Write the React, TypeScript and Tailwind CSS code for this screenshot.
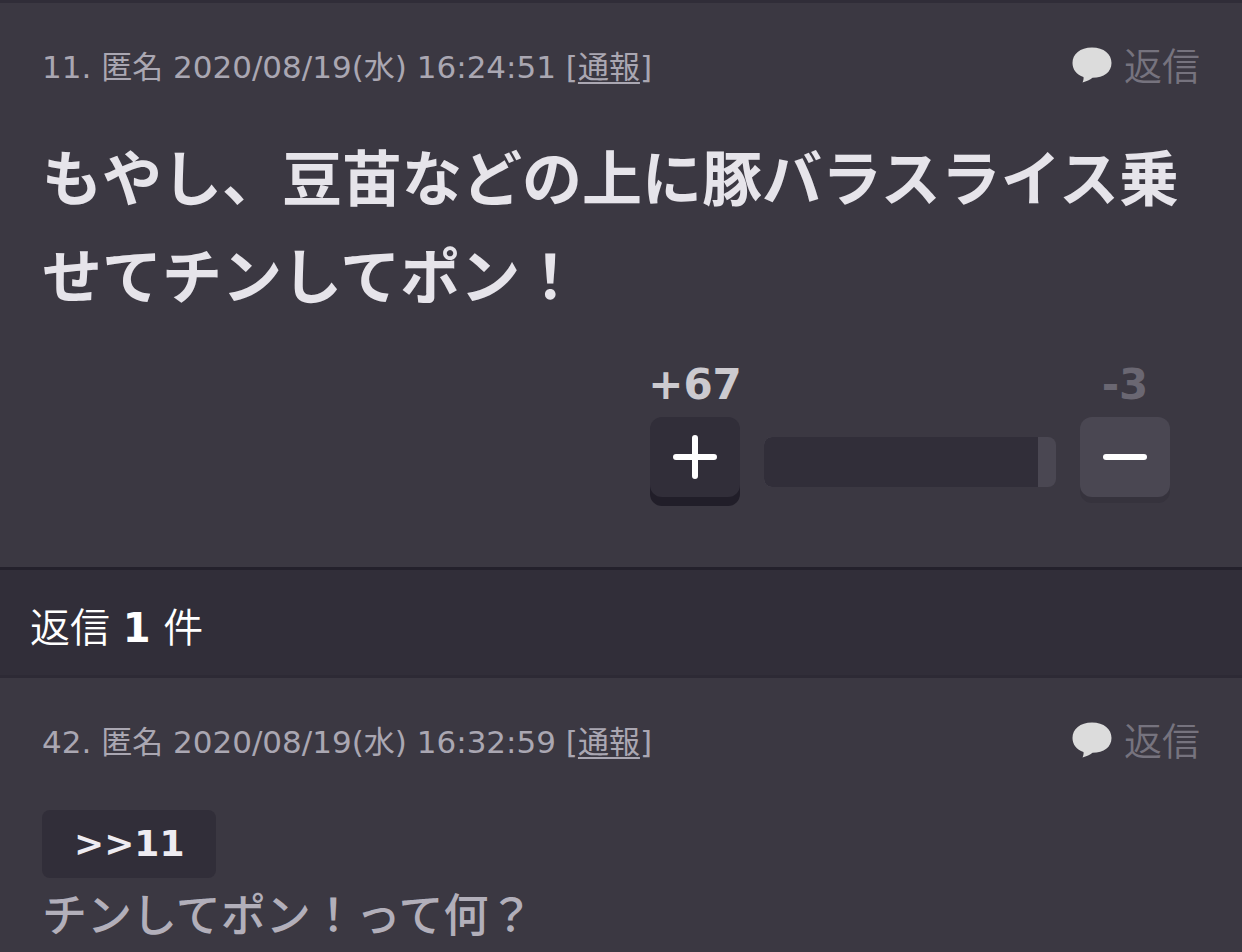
interface Comment {
    id: number;
    nome: string;
    date: string;
}

const FillBubble = () => (
    <svg viewBox="0 0 40 36" className="mb-1 h-9 w-10 shrink-0" aria-hidden="true">
        <path
            d="M20 0.500C8 0.500 0.500 7 0.500 16C0.500 22.500 4.500 27.500 11.500 30C11.800 32 11.300 33.800 10.500 35.500C14.500 34.500 18 33 20.500 30.800C32 30.800 39.500 25 39.500 16C39.500 7 32 0.500 20 0.500Z"
            fill="#dcdcdc"
        />
    </svg>
);

const MetaRow = ({ id, nome, date }: Comment) => (
    <header className="flex h-12 items-center justify-between text-[#aaa7b2]">
        <p className="whitespace-nowrap text-[31px] leading-12">
            {id}. {nome} {date} [
            <a href="#report" className="underline decoration-2 underline-offset-4">通報</a>]
        </p>
        <a href="#reply" className="flex items-center gap-3 text-[38px] leading-12 font-[350] text-[#76737e]">
            <FillBubble />
            返信
        </a>
    </header>
);

const Votes = ({ plus, minus, ratio }: { plus: number; minus: number; ratio: number }) => (
    <div className="mt-[34px] mr-[30px] ml-auto flex w-[520px] max-w-full gap-6">
        <div className="flex w-[90px] flex-col items-center">
            <span className="text-[42px] leading-12 font-bold text-[#cccacf]">+{plus}</span>
            <button
                type="button"
                aria-label="プラス"
                className="mt-2 flex h-20 w-full items-center justify-center rounded-xl bg-[#312e39] shadow-[0_9px_0_#211e29]"
            >
                <svg viewBox="0 0 44 44" className="h-11 w-11" stroke="#fff" strokeWidth="6" strokeLinecap="round" aria-hidden="true">
                    <path d="M3 22H41M22 3V41" />
                </svg>
            </button>
        </div>
        <div className="mt-19 flex h-[50px] flex-1 overflow-hidden rounded-lg bg-[#4a4752]">
            <div className="h-full rounded-l-lg bg-[#312e39]" style={{ width: `${ratio}%` }} />
        </div>
        <div className="flex w-[90px] flex-col items-center">
            <span className="text-[42px] leading-12 font-bold text-[#6a6772]">-{minus}</span>
            <button
                type="button"
                aria-label="マイナス"
                className="mt-2 flex h-20 w-full items-center justify-center rounded-xl bg-[#4a4752] shadow-[0_6px_0_#36333d]"
            >
                <svg viewBox="0 0 44 44" className="h-11 w-11" stroke="#fff" strokeWidth="6" strokeLinecap="round" aria-hidden="true">
                    <path d="M3 22H41" />
                </svg>
            </button>
        </div>
    </div>
);

const App = () => {
    return (
        <main className="min-h-screen bg-[#3b3842] font-['DejaVu_Sans','Noto_Sans_CJK_JP',sans-serif]">
            <article className="border-t-3 border-[#302d38] px-[42px] pt-10 pb-[70px]">
                <MetaRow id={11} nome="匿名" date="2020/08/19(水) 16:24:51" />
                <p className="mt-10 text-[60px] leading-[98px] font-semibold text-[#e6e4ea]">
                    もやし、豆苗などの上に豚バラスライス乗せてチンしてポン！
                </p>
                <Votes plus={67} minus={3} ratio={94} />
            </article>

            <h2 className="border-y-3 border-t-[#24212c] border-b-[#2d2a35] bg-[#312e39] px-[30px] pt-[34px] pb-[22px] text-[40px] leading-[49px] font-[350] text-white">
                返信 <strong className="font-bold">1</strong> 件
            </h2>

            <article className="px-[42px] pt-10">
                <MetaRow id={42} nome="匿名" date="2020/08/19(水) 16:32:59" />
                <a
                    href="#comment11"
                    className="mt-11 inline-block rounded-lg bg-[#312e39] px-8 text-[36px] leading-[68px] font-bold text-[#eeecf2]"
                >
                    &gt;&gt;11
                </a>
                <p className="mt-2 text-[45px] leading-[62px] font-medium text-[#b2afba]">チンしてポン！って何？</p>
            </article>
        </main>
    );
};

export default App;
